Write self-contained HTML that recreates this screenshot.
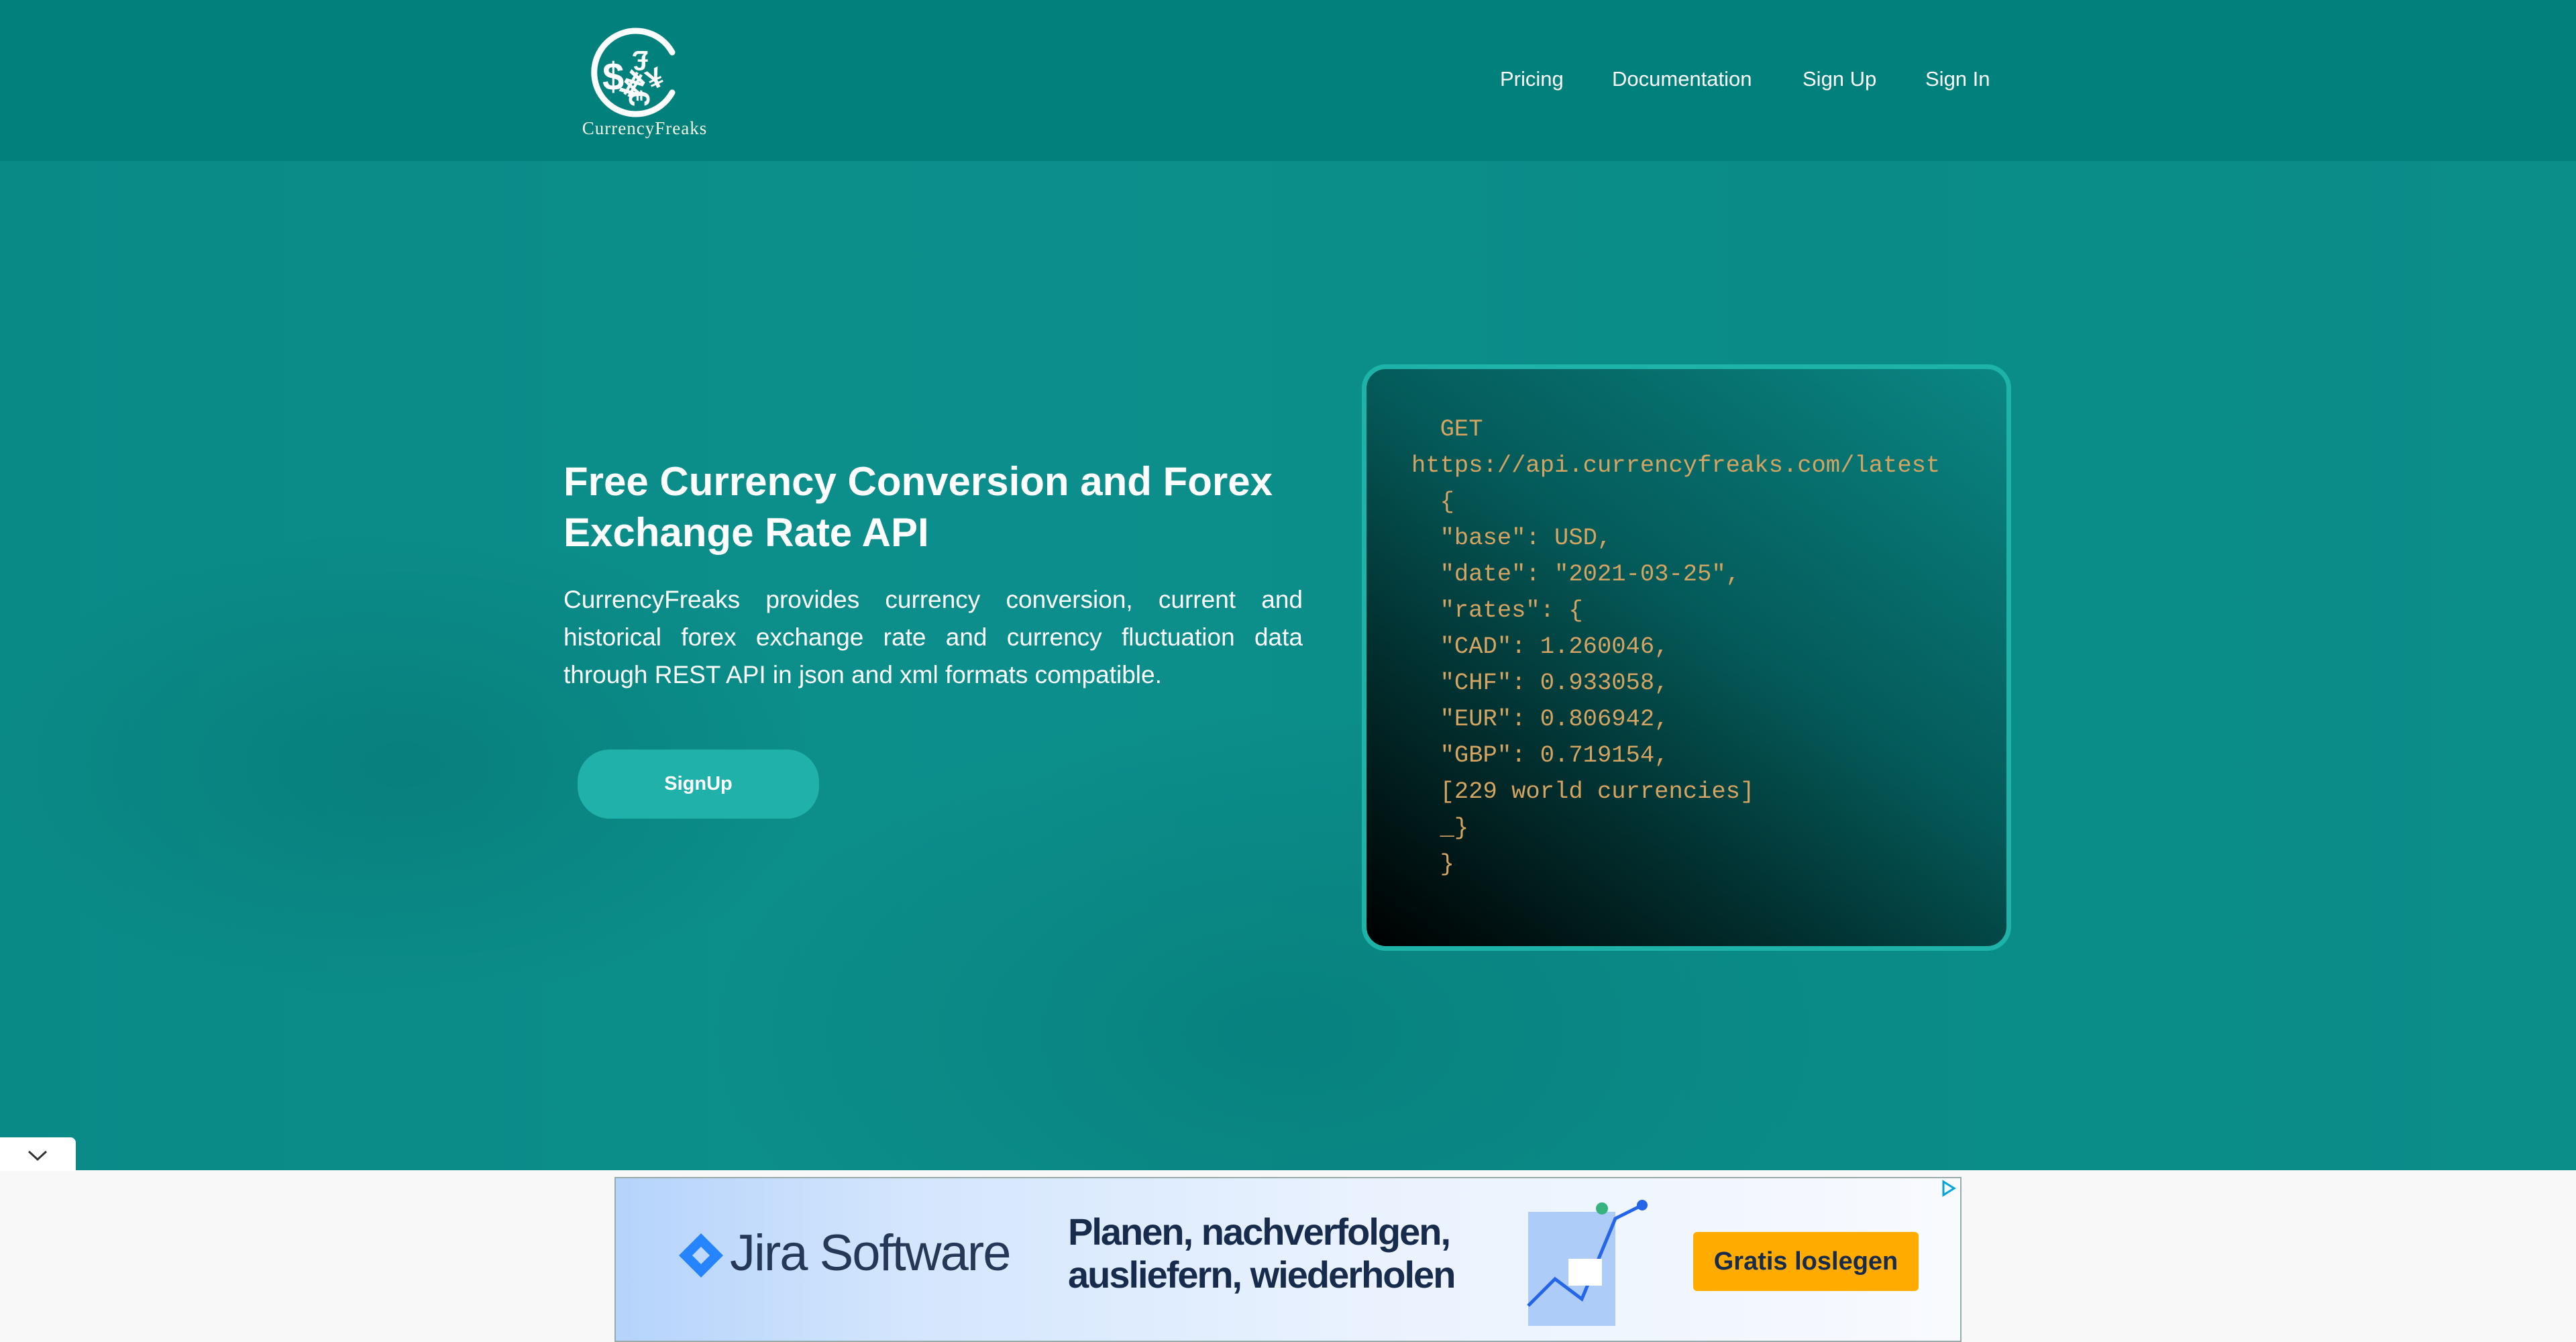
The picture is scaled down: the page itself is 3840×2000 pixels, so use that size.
<!DOCTYPE html>
<html><head><meta charset="utf-8"><style>
*{margin:0;padding:0;box-sizing:border-box}
html,body{width:3840px;height:2000px;overflow:hidden;font-family:"Liberation Sans",Arial,sans-serif}
body{background:#f8f8f8;position:relative}
.hdr{position:absolute;left:0;top:0;width:3840px;height:240px;background:#02807c}
.hero{position:absolute;left:0;top:240px;width:3840px;height:1504px;background:
radial-gradient(ellipse 900px 500px at 600px 900px,rgba(0,90,88,.25),transparent 70%),
radial-gradient(ellipse 1200px 700px at 1900px 1300px,rgba(0,100,98,.3),transparent 70%),
linear-gradient(90deg,#0a8a87 0%,#0c8f8c 40%,#0a8b88 70%,#0b8d8a 100%)}
.nav a{position:absolute;top:100px;color:#fff;font-size:31px;text-decoration:none}
.logo-t{position:absolute;left:850px;top:176px;width:222px;text-align:center;font-family:"Liberation Serif",serif;font-size:27px;color:#f4f6e4;letter-spacing:1px}
h1{position:absolute;left:840px;top:680px;width:1140px;color:#fff;font-size:60px;line-height:76px;font-weight:bold}
p.d{position:absolute;left:840px;top:866px;width:1102px;color:#fff;font-size:37px;line-height:56px;text-align:justify}
.btn{position:absolute;left:861px;top:1117px;width:360px;height:103px;border-radius:48px;background:#20b2aa;color:#fff;font-weight:bold;font-size:29px;text-align:center;line-height:103px}
.code{position:absolute;left:2030px;top:543px;width:968px;height:874px;border:7px solid #1db3a8;border-radius:36px;background:linear-gradient(35deg,#000 0%,#022c2c 28%,#045a59 55%,#0a8784 100%)}
.code pre{position:absolute;left:67px;top:63px;font-family:"Liberation Mono",monospace;font-size:35.5px;line-height:54px;color:#d4a462}
.ad{position:absolute;left:916px;top:1754px;width:2008px;height:246px;border:2px solid #9aa;background:linear-gradient(90deg,#b5d3fb 0%,#d4e6fd 22%,#e9f2fe 55%,#f8fafe 100%)}
.tab{position:absolute;left:0;top:1695px;width:113px;height:50px;background:#fff;border-radius:0 8px 0 0}
</style></head><body>
<div class="hdr">
<svg style="position:absolute;left:880px;top:38px" width="140" height="140" viewBox="0 0 140 140">
<path d="M122 40 A62 62 0 1 0 122 100" fill="none" stroke="#fff" stroke-width="9" stroke-linecap="round"/>
<text x="18" y="96" font-family="Liberation Sans" font-size="58" font-weight="bold" fill="#fff">$</text>
<text x="50" y="66" font-family="Liberation Sans" font-size="42" font-weight="bold" fill="#fff" transform="rotate(180 68 52)">£</text>
<text x="46" y="100" font-family="Liberation Sans" font-size="40" font-weight="bold" fill="#fff" transform="rotate(-60 66 88)">₩</text>
<text x="86" y="92" font-family="Liberation Sans" font-size="42" font-weight="bold" fill="#fff" transform="rotate(-25 100 82)">¥</text>
<text x="50" y="132" font-family="Liberation Sans" font-size="44" font-weight="bold" fill="#fff" transform="rotate(90 72 118)">€</text>
</svg>
<div class="logo-t">CurrencyFreaks</div>
<div class="nav"><a style="left:2236px">Pricing</a><a style="left:2403px">Documentation</a><a style="left:2687px">Sign Up</a><a style="left:2870px">Sign In</a></div>
</div>
<div class="hero"></div>
<h1>Free Currency Conversion and Forex Exchange Rate API</h1>
<p class="d">CurrencyFreaks provides currency conversion, current and historical forex exchange rate and currency fluctuation data through REST API in json and xml formats compatible.</p>
<div class="btn">SignUp</div>
<div class="code"><pre>  GET
https://api.currencyfreaks.com/latest
  {
  "base": USD,
  "date": "2021-03-25",
  "rates": {
  "CAD": 1.260046,
  "CHF": 0.933058,
  "EUR": 0.806942,
  "GBP": 0.719154,
  [229 world currencies]
  _}
  }</pre></div>
<div class="tab"><svg style="position:absolute;left:40px;top:18px" width="32" height="18" viewBox="0 0 32 18"><path d="M3 3 L16 15 L29 3" fill="none" stroke="#333" stroke-width="3"/></svg></div>
<div class="ad">
<svg style="position:absolute;left:92px;top:80px" width="70" height="70" viewBox="0 0 70 70"><path d="M35 2 L68 35 L35 68 L2 35Z" fill="#2684ff"/><path d="M35 22 L48 35 L35 48 L22 35Z" fill="#bfd9ff"/></svg>
<div style="position:absolute;left:170px;top:68px;font-size:76px;color:#253858;letter-spacing:-2px">Jira Software</div>
<div style="position:absolute;left:674px;top:48px;font-size:56px;line-height:64px;color:#172b4d;font-weight:bold;letter-spacing:-2px">Planen, nachverfolgen,<br>ausliefern, wiederholen</div>
<svg style="position:absolute;left:1350px;top:20px" width="230" height="220" viewBox="0 0 230 220"><rect x="10" y="30" width="130" height="170" fill="#9cc2f5" opacity=".8"/><polyline points="10,170 50,130 90,160 140,40 180,20" fill="none" stroke="#2566e8" stroke-width="5"/><circle cx="180" cy="20" r="8" fill="#2566e8"/><rect x="70" y="100" width="50" height="40" fill="#fff"/><circle cx="120" cy="25" r="9" fill="#36b37e"/></svg>
<div style="position:absolute;left:1606px;top:80px;width:336px;height:88px;background:#ffab00;border-radius:6px;color:#172b4d;font-weight:bold;font-size:38px;text-align:center;line-height:88px">Gratis loslegen</div>
<svg style="position:absolute;right:4px;top:2px" width="26" height="26" viewBox="0 0 26 26"><path d="M5 3 L21 13 L5 23Z" fill="none" stroke="#00a4d8" stroke-width="3"/></svg>
</div>
</body></html>
